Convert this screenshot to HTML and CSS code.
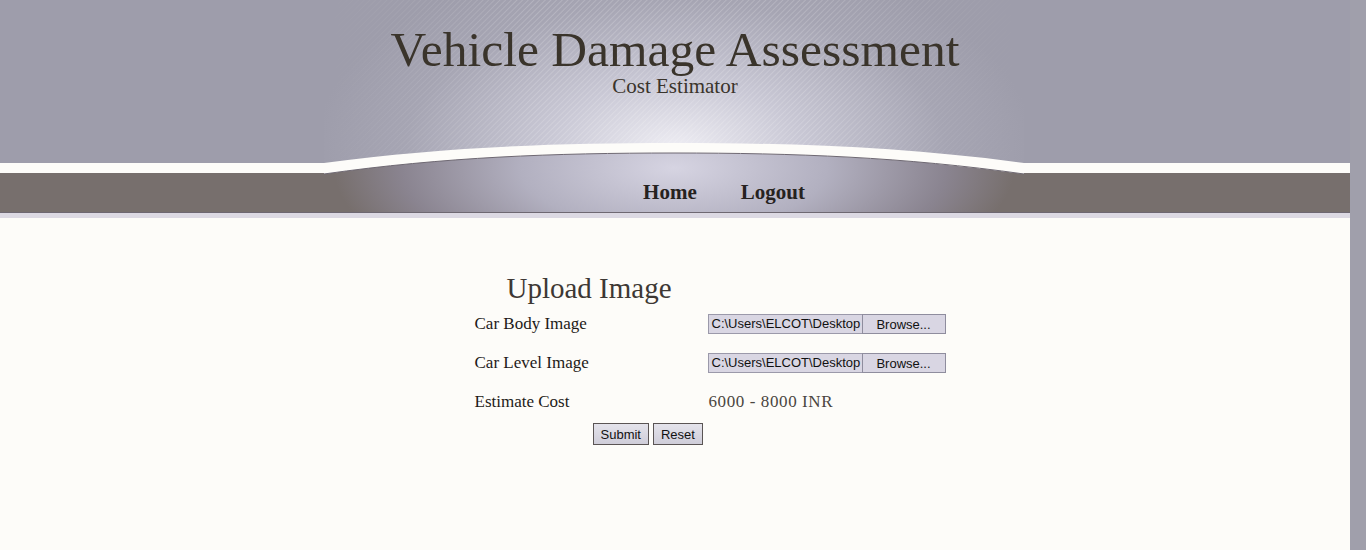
FILE: index.html
```html
<!DOCTYPE html>
<html>
<head>
<meta charset="utf-8">
<title>Vehicle Damage Assessment</title>
<link rel="stylesheet" href="styles.css">
</head>
<body>
<div class="page">
  <header class="header">
    <svg class="deco" width="700" height="218" viewBox="0 0 700 218" aria-hidden="true">
      <defs>
        <radialGradient id="glow" cx="351" cy="150" r="360" gradientUnits="userSpaceOnUse" gradientTransform="translate(351 150) scale(1 0.55) translate(-351 -150)">
          <stop offset="0" stop-color="#efeef4"/>
          <stop offset="0.35" stop-color="#c9c8d5"/>
          <stop offset="0.75" stop-color="#a6a5b3"/>
          <stop offset="1" stop-color="#9e9dab"/>
        </radialGradient>
        <radialGradient id="navglow" cx="350" cy="168" r="340" gradientUnits="userSpaceOnUse" gradientTransform="translate(350 168) scale(1 0.4) translate(-350 -168)">
          <stop offset="0" stop-color="#d6d4e2"/>
          <stop offset="0.45" stop-color="#b2b0c0"/>
          <stop offset="0.8" stop-color="#8a8490"/>
          <stop offset="1" stop-color="#776f6d"/>
        </radialGradient>
        <pattern id="stripes" width="4" height="4" patternUnits="userSpaceOnUse" patternTransform="rotate(45)">
          <rect width="1" height="4" fill="#ffffff" opacity="0.18"/>
        </pattern>
        <linearGradient id="fade" x1="0" y1="0" x2="1" y2="0">
          <stop offset="0" stop-color="#fff" stop-opacity="0"/>
          <stop offset="0.3" stop-color="#fff" stop-opacity="1"/>
          <stop offset="0.7" stop-color="#fff" stop-opacity="1"/>
          <stop offset="1" stop-color="#fff" stop-opacity="0"/>
        </linearGradient>
        <mask id="fademask"><rect width="700" height="163" fill="url(#fade)"/></mask>
      </defs>
      <rect x="0" y="0" width="700" height="164" fill="url(#glow)"/>
      <rect x="0" y="0" width="700" height="164" fill="url(#stripes)" mask="url(#fademask)"/>
      <path d="M0,174 C120,157 230,153 350,153 C470,153 580,157 700,174 L700,213 L0,213 Z" fill="url(#navglow)"/>
      <path d="M0,163 C120,147 230,143 350,143 C470,143 580,147 700,163 L700,174 C580,157 470,153 350,153 C230,153 120,157 0,174 Z" fill="#fdfcf9"/>
      <path d="M0,174 C120,157 230,153 350,153 C470,153 580,157 700,174" fill="none" stroke="#6e6872" stroke-width="1"/>
      <rect x="0" y="212" width="700" height="1" fill="#6e6872"/>
    </svg>
    <div class="brand">
      <h1 class="title">Vehicle Damage Assessment</h1>
      <p class="subtitle">Cost Estimator</p>
    </div>
    <nav class="nav">
      <a class="nav-link" href="#">Home</a>
      <a class="nav-link" href="#">Logout</a>
    </nav>
  </header>
  <main class="content">
    <div class="panel">
      <h2 class="panel-title">Upload Image</h2>
      <form class="form">
        <div class="row">
          <span class="label">Car Body Image</span>
          <span class="file"><span class="file-path">C:\Users\ELCOT\Desktop</span><span class="file-btn">Browse...</span></span>
        </div>
        <div class="row">
          <span class="label">Car Level Image</span>
          <span class="file"><span class="file-path">C:\Users\ELCOT\Desktop</span><span class="file-btn">Browse...</span></span>
        </div>
        <div class="row">
          <span class="label">Estimate Cost</span>
          <span class="value">6000 - 8000 INR</span>
        </div>
        <div class="actions">
          <button type="button" class="btn">Submit</button>
          <button type="button" class="btn">Reset</button>
        </div>
      </form>
    </div>
  </main>
</div>
</body>
</html>
```
FILE: styles.css
```css
html, body {
  margin: 0;
  padding: 0;
}
body {
  background: #a09fab;
  font-family: "Liberation Serif", "DejaVu Serif", serif;
}
.page {
  width: 1350px;
  min-height: 550px;
  background: #fdfcf9;
}
.header {
  position: relative;
  height: 218px;
  background: linear-gradient(to bottom,
    #9e9dab 0, #9e9dab 163px,
    #fdfcf9 163px, #fdfcf9 173px,
    #776f6d 173px, #776f6d 212px,
    #6e6872 212px, #6e6872 213px,
    #dcd9e3 213px, #dcd9e3 218px);
  display: flex;
  flex-direction: column;
  align-items: center;
}
.deco {
  position: absolute;
  left: 324px;
  top: 0;
  display: block;
}
.brand {
  position: relative;
  display: flex;
  flex-direction: column;
  align-items: center;
  padding-top: 23px;
  height: 151px;
  box-sizing: border-box;
}
.title {
  margin: 0;
  font-weight: normal;
  font-size: 49.5px;
  line-height: 53px;
  color: #3a342b;
}
.subtitle {
  margin: 0;
  font-size: 21px;
  line-height: 20px;
  color: #3a342b;
}
.nav {
  position: relative;
  display: flex;
  gap: 44px;
  padding-top: 29px;
  margin-left: 98px;
}
.nav-link {
  font-weight: bold;
  font-size: 21px;
  color: #262220;
  text-decoration: none;
}
.content {
  display: flex;
  justify-content: center;
}
.panel {
  width: 471px;
  margin-left: 70px;
  padding-top: 54px;
}
.panel-title {
  margin: 0 0 0 32px;
  font-weight: normal;
  font-size: 29px;
  line-height: 32px;
  color: #3d3834;
}
.form {
  display: flex;
  flex-direction: column;
}
.row {
  display: flex;
  align-items: center;
  height: 39px;
}
.label {
  width: 234px;
  font-size: 17px;
  color: #1e1a18;
}
.file {
  display: flex;
  height: 20px;
  font-family: "Liberation Sans", Arial, sans-serif;
  font-size: 13px;
  color: #111;
}
.file-path {
  width: 150px;
  overflow: hidden;
  white-space: nowrap;
  background: #d9d6e3;
  border: 1px solid #9b99aa;
  border-right: none;
  padding-left: 3px;
  line-height: 18px;
}
.file-btn {
  width: 82px;
  text-align: center;
  background: #d9d6e3;
  border: 1px solid #8f8d9e;
  line-height: 20px;
  height: 18px;
}
.value {
  font-size: 17px;
  letter-spacing: 0.6px;
  color: #4a4540;
}
.actions {
  display: flex;
  gap: 4px;
  padding-left: 118px;
  margin-top: 2px;
}
.btn {
  font-family: "Liberation Sans", Arial, sans-serif;
  font-size: 13px;
  color: #111;
  height: 22px;
  padding: 0 7px;
  background: linear-gradient(to bottom, #e4e3eb, #cfcdd9);
  border: 1px solid #5a5454;
  border-radius: 0;
}
```
